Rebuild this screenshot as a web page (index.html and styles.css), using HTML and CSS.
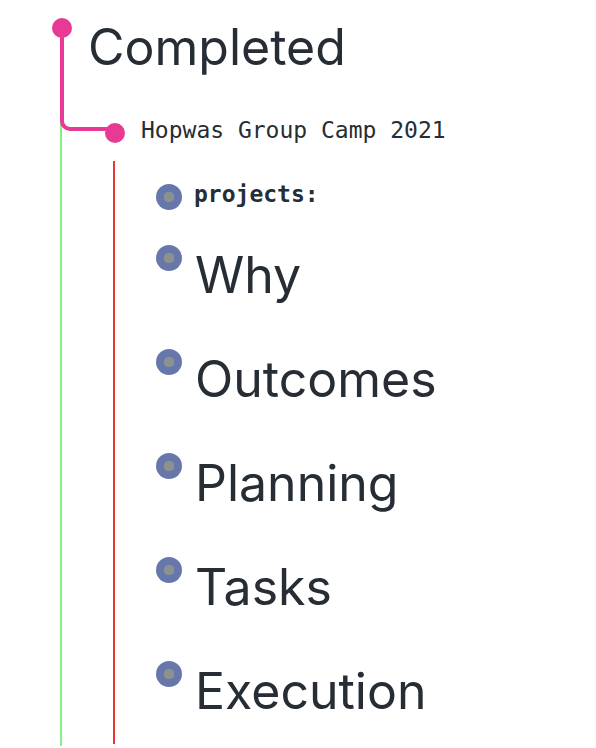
FILE: index.html
```html
<!DOCTYPE html>
<html lang="en">
<head>
    <meta charset="UTF-8">
    <meta name="viewport" content="width=device-width, initial-scale=1.0">
    <title>Completed</title>
    <link rel="stylesheet" href="styles.css">
</head>
<body>
    <div class="block root">
        <span class="elbow"></span>
        <div class="row">
            <span class="dot"></span>
            <h1 class="title">Completed</h1>
        </div>
        <div class="children green">
            <div class="block">
                <div class="row sub">
                    <span class="dot"></span>
                    <div class="code">Hopwas Group Camp 2021</div>
                </div>
                <div class="children red">
                    <div class="item small">
                        <span class="bullet"></span>
                        <strong class="code">projects:</strong>
                    </div>
                    <div class="item">
                        <span class="bullet"></span>
                        <span class="heading">Why</span>
                    </div>
                    <div class="item">
                        <span class="bullet"></span>
                        <span class="heading">Outcomes</span>
                    </div>
                    <div class="item">
                        <span class="bullet"></span>
                        <span class="heading">Planning</span>
                    </div>
                    <div class="item">
                        <span class="bullet"></span>
                        <span class="heading">Tasks</span>
                    </div>
                    <div class="item">
                        <span class="bullet"></span>
                        <span class="heading">Execution</span>
                    </div>
                </div>
            </div>
        </div>
    </div>
</body>
</html>
```

FILE: styles.css
```css
body {
    font-family: Inter, "Noto Sans", sans-serif;
    color: #262d35;
    background-color: #fff;
    margin: 0;
    padding: 18px 0 0 52px;
    overflow: hidden;
}
.block {
    position: relative;
}
.row {
    display: flex;
    align-items: flex-start;
    gap: 16px;
}
.dot {
    width: 20px;
    height: 20px;
    border-radius: 50%;
    background-color: #e83a95;
    flex-shrink: 0;
}
.title {
    margin: 0;
    font-size: 50px;
    font-weight: 400;
    line-height: 58px;
}
.elbow {
    position: absolute;
    left: 8px;
    top: 12px;
    width: 46px;
    height: 97px;
    border-left: 4px solid #e83a95;
    border-bottom: 4px solid #e83a95;
    border-bottom-left-radius: 10px;
}
.children {
    border-left: 2px solid transparent;
}
.green {
    margin-left: 8px;
    border-left-color: #86f086;
    padding: 37px 0 2px 0;
}
.red {
    margin: 14px 0 0 51px;
    border-left-color: #e53935;
    padding: 16px 0 17px 41px;
}
.sub {
    padding-left: 43px;
}
.sub .dot {
    margin-top: 10px;
}
.code {
    font-family: "DejaVu Sans Mono", "Liberation Mono", monospace;
    font-size: 23px;
    line-height: 34px;
}
.item {
    display: flex;
    align-items: flex-start;
    gap: 13px;
    margin-top: 32px;
}
.item.small {
    margin-top: 0;
    margin-bottom: -4px;
    gap: 12px;
}
.bullet {
    width: 26px;
    height: 26px;
    border-radius: 50%;
    flex-shrink: 0;
    margin-top: 6px;
    background: radial-gradient(circle, #8a918f 0 5px, #6877ab 5.5px);
}
.item.small .bullet {
    margin-top: 7px;
}
.heading {
    font-size: 50px;
    line-height: 72px;
}
```
